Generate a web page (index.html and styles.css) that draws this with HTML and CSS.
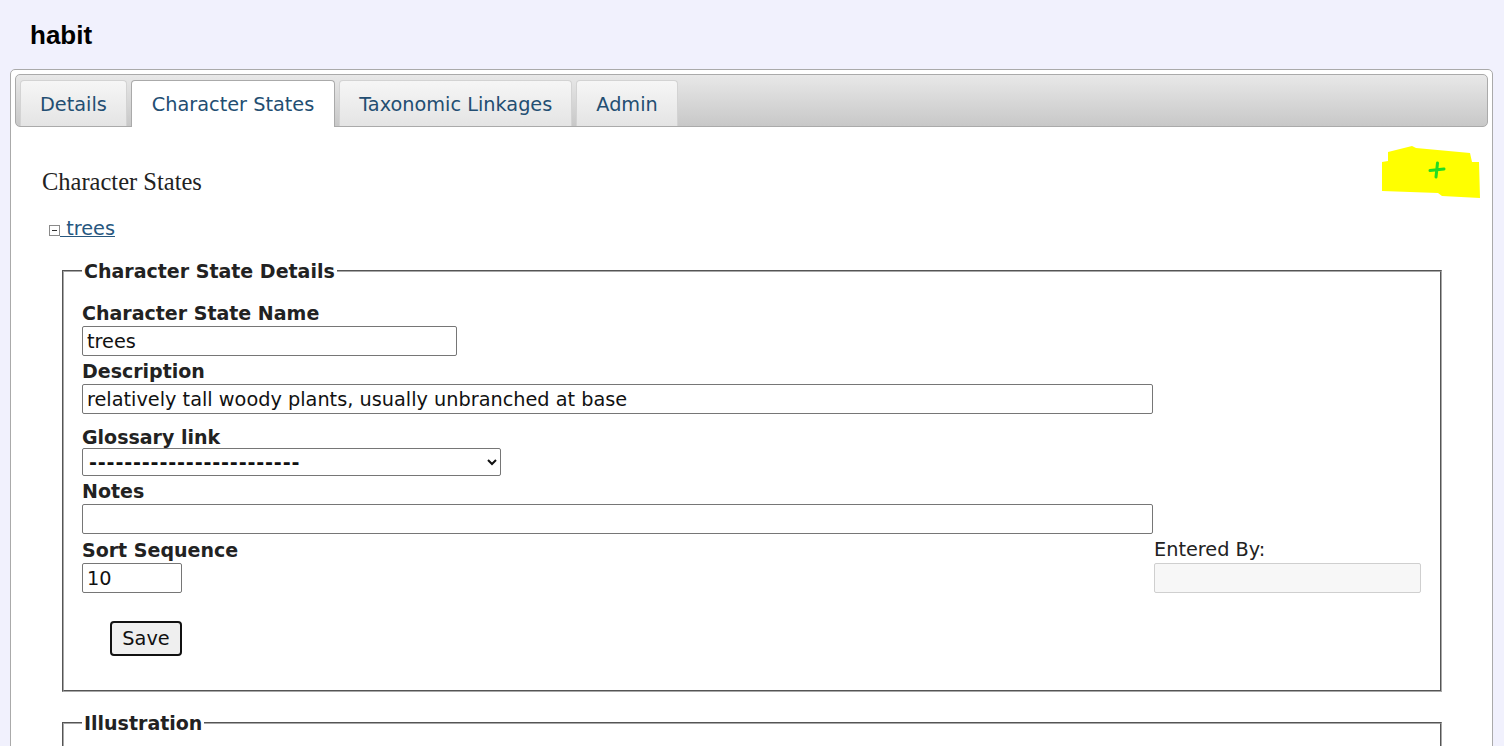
FILE: index.html
```html
<!DOCTYPE html>
<html>
<head>
<meta charset="utf-8">
<title>habit</title>
<link rel="stylesheet" href="styles.css">
</head>
<body>
<h1 class="page-title">habit</h1>
<div class="panel">
  <ul class="tabbar">
    <li class="tab">Details</li>
    <li class="tab active">Character States</li>
    <li class="tab">Taxonomic Linkages</li>
    <li class="tab">Admin</li>
  </ul>
  <div class="tab-content">
    <div class="add-highlight">
      <svg class="hl-shape" width="98" height="52" viewBox="0 0 98 52"><polygon points="6,6 30,0 34,2 88,7 90,16 97,16 98,52 60,50 56,47 0,45 0,16 6,15" fill="#ffff00"/></svg>
      <svg class="plus" width="18" height="18" viewBox="0 0 18 18"><path d="M9.5 2 L8 16 M2 9.5 L16 8" stroke="#22dd22" stroke-width="3" stroke-linecap="round" fill="none"/></svg>
    </div>
    <h2 class="section-title">Character States</h2>
    <div class="tree-item">
      <span class="toggle"><span class="toggle-minus"></span></span><a class="tree-link" href="#">&nbsp;trees</a>
    </div>
    <fieldset class="group">
      <legend>Character State Details</legend>
      <div class="field f-name">
        <label>Character State Name</label>
        <input class="input w-name" type="text" value="trees">
      </div>
      <div class="field f-desc">
        <label>Description</label>
        <input class="input w-wide" type="text" value="relatively tall woody plants, usually unbranched at base">
      </div>
      <div class="field f-gloss">
        <label>Glossary link</label>
        <select class="input select w-select"><option>------------------------</option></select>
      </div>
      <div class="field f-notes">
        <label>Notes</label>
        <input class="input w-wide" type="text" value="">
      </div>
      <div class="bottom-row">
        <div class="field">
          <label>Sort Sequence</label>
          <input class="input w-sort" type="text" value="10">
        </div>
        <div class="field">
          <label class="plain">Entered By:</label>
          <input class="input w-entered disabled" type="text" value="" disabled>
        </div>
      </div>
      <button class="save-btn" type="button">Save</button>
    </fieldset>
    <fieldset class="group illustration">
      <legend>Illustration</legend>
      <div class="ill-body"></div>
    </fieldset>
  </div>
</div>
</body>
</html>
```

FILE: styles.css
```css
html, body {
  margin: 0;
  padding: 0;
}
body {
  background: #f1f1fd;
  font-family: "DejaVu Sans", Verdana, sans-serif;
  color: #222;
  overflow: hidden;
}
.page-title {
  margin: 0;
  padding: 20px 30px 0;
  font: bold 26px/30px "Liberation Sans", Arial, sans-serif;
  color: #000;
}
.panel {
  position: relative;
  margin: 19px 11px 0 10px;
  border: 1px solid #aaa;
  border-radius: 5px;
  background: #fff;
  padding: 4px;
}
.tabbar {
  list-style: none;
  margin: 0;
  padding: 5px 4px 0 4px;
  display: flex;
  gap: 4px;
  border: 1px solid #aaa;
  border-radius: 5px;
  background: linear-gradient(#e8e8e8, #c8c8c8);
  height: 46px;
}
.tab {
  height: 45px;
  margin-bottom: -1px;
  padding: 0 19px;
  border: 1px solid #d3d3d3;
  border-bottom: none;
  border-radius: 4px 4px 0 0;
  background: linear-gradient(#f6f6f6, #e4e4e4);
  color: #234e72;
  font-size: 19.3px;
  line-height: 47px;
  white-space: nowrap;
}
.tab.active {
  background: #fff;
  border-color: #aaa;
  height: 46px;
  padding: 0 20px;
}
.tab-content {
  padding: 0 27px 40px;
}
.add-highlight {
  position: absolute;
  left: 1371px;
  top: 76px;
  width: 98px;
  height: 52px;
}
.hl-shape {
  display: block;
}
.plus {
  position: absolute;
  left: 46px;
  top: 15px;
}
.section-title {
  margin: 41px 0 0;
  font: normal 24.5px/28px "Liberation Serif", Georgia, serif;
  color: #222;
}
.tree-item {
  margin: 22px 0 0 7px;
  line-height: 22px;
  font-size: 19.3px;
  display: flex;
  align-items: center;
}
.toggle {
  width: 9px;
  height: 9px;
  border: 1px solid #8a8a8a;
  background: #fff;
  display: inline-flex;
  align-items: center;
  justify-content: center;
  margin-top: 2px;
}
.toggle-minus {
  width: 5px;
  height: 1px;
  background: #333;
}
.tree-link {
  color: #27577f;
  text-decoration: underline;
}
.group {
  margin: 20px 19px 0 20px;
  padding: 20px 18px 34px 18px;
  border: 2px groove #a8a8a8;
  min-width: 0;
}
.group legend {
  padding: 0 2px;
  font-weight: bold;
  font-size: 19px;
  line-height: 22px;
  color: #222;
}
.field label {
  display: block;
  font-weight: bold;
  font-size: 19px;
  line-height: 22px;
  color: #222;
}
.field label.plain {
  font-weight: normal;
  font-size: 19.3px;
}
.input {
  display: block;
  box-sizing: border-box;
  margin-top: 2px;
  height: 30px;
  padding: 0 4px;
  border: 1px solid #767676;
  border-radius: 2px;
  font-family: "DejaVu Sans", Verdana, sans-serif;
  font-size: 19.3px;
  color: #111;
  background: #fff;
}
.select {
  height: 28px;
  margin-top: 0;
  padding: 0 2px;
  font-weight: bold;
  letter-spacing: 0.8px;
}
.w-name { width: 375px; }
.w-wide { width: 1071px; }
.w-select { width: 419px; }
.w-sort { width: 100px; }
.w-entered { width: 267px; }
.input.disabled {
  background: #f7f7f7;
  border-color: #cfcfcf;
}
.f-name { margin-bottom: 4px; }
.f-desc { margin-bottom: 12px; }
.f-gloss { margin-bottom: 4px; }
.f-notes { margin-bottom: 5px; }
.bottom-row {
  display: grid;
  grid-template-columns: 1072px auto;
}
.save-btn {
  display: block;
  margin: 28px 0 0 28px;
  width: 72px;
  height: 35px;
  border: 2px solid #111;
  border-radius: 4px;
  background: #efefef;
  font-family: "DejaVu Sans", Verdana, sans-serif;
  font-size: 19.3px;
  color: #111;
  padding: 0;
}
.illustration {
  margin-top: 20px;
  padding-bottom: 0;
}
.ill-body {
  height: 60px;
}
```
